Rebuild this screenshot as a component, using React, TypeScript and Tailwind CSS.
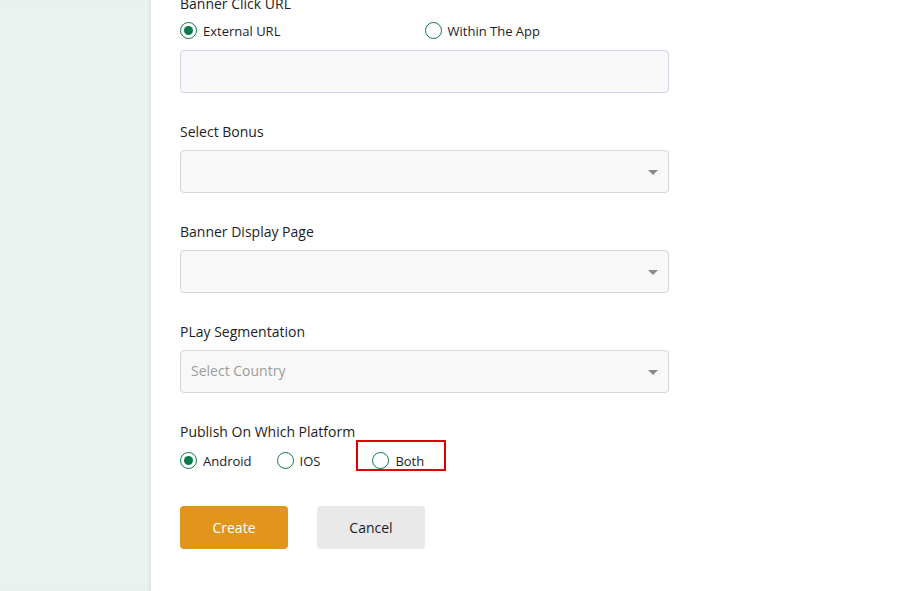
const Radio = ({ checked, label }: { checked?: boolean; label: string }) => (
  <label className="flex items-center gap-[6px] text-[13px] text-[#1c1c28]">
    <span className="w-[17px] h-[17px] rounded-full border-[1.5px] border-[#0b7a4b] flex items-center justify-center bg-white">
      {checked && <span className="w-[9px] h-[9px] rounded-full bg-[#0b7a4b]" />}
    </span>
    <span className="pt-[2px]">{label}</span>
  </label>
);

const SelectBox = ({ placeholder }: { placeholder?: string }) => (
  <div className="h-[43px] w-[489px] rounded border border-[#d6d6d6] bg-[#f8f8f8] flex items-center justify-between pl-[10px] pr-[10px]">
    <span className="text-[14px] text-[#9b9b9b] -mt-[1px]">{placeholder}</span>
    <svg width="10" height="5" viewBox="0 0 10 5" className="mt-[2px]">
      <path d="M0 0h10L5 5z" fill="#8a8a8a" />
    </svg>
  </div>
);

export default function App() {
  return (
    <div
      className="flex w-[900px] h-[591px] overflow-hidden bg-white"
      style={{ fontFamily: '"Open Sans", "Noto Sans", sans-serif' }}
    >
      <aside className="w-[151px] shrink-0 bg-[#e9f2ee] shadow-[inset_-3px_0_3px_-1px_rgba(0,0,0,0.06)]" />
      <main className="flex-1 pl-[29px]">
        <div className="-mt-[6px] flex flex-col">
          <div className="text-[14px] text-[#1c1c28] leading-[20px]">Banner Click URL</div>
          <div className="grid grid-cols-2 w-[489px] mt-[6px]">
            <Radio checked label="External URL" />
            <Radio label="Within The App" />
          </div>
          <div className="mt-[8px] h-[43px] w-[489px] rounded border border-[#d5d3e6] bg-[#f8f8f8]" />

          <div className="mt-[29px] text-[14px] text-[#1c1c28] leading-[20px]">Select Bonus</div>
          <div className="mt-[8px]"><SelectBox /></div>

          <div className="mt-[29px] text-[14px] text-[#1c1c28] leading-[20px]">Banner Display Page</div>
          <div className="mt-[8px]"><SelectBox /></div>

          <div className="mt-[29px] text-[14px] text-[#1c1c28] leading-[20px]">PLay Segmentation</div>
          <div className="mt-[8px]"><SelectBox placeholder="Select Country" /></div>

          <div className="mt-[29px] text-[14px] text-[#1c1c28] leading-[20px]">Publish On Which Platform</div>
          <div className="flex items-center mt-[8px]">
            <Radio checked label="Android" />
            <div className="ml-[25px]"><Radio label="IOS" /></div>
            <div className="relative -top-[5px] ml-[36px] -my-[7px] border-2 border-[#e00000] w-[90px] h-[31px] flex items-center pl-[14px] pt-[10px]">
              <Radio label="Both" />
            </div>
          </div>

          <div className="flex gap-[29px] mt-[35px]">
            <button className="w-[108px] h-[43px] rounded bg-[#e1951a] text-white text-[14px]">Create</button>
            <button className="w-[108px] h-[43px] rounded bg-[#e9e9e9] text-[#1c1c28] text-[14px]">Cancel</button>
          </div>
        </div>
      </main>
    </div>
  );
}
